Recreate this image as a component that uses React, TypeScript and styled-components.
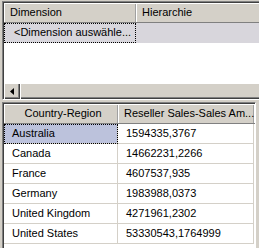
import React from 'react';
import styled, { createGlobalStyle, css } from 'styled-components';

const GlobalStyle = createGlobalStyle`
  html, body {
    margin: 0;
    padding: 0;
    background: #d4d0c8;
    overflow: hidden;
  }
  body {
    font-family: "Liberation Sans", Arial, sans-serif;
    font-size: 11px;
    color: #000;
  }
`;

const Page = styled.div`
  width: 259px;
  height: 248px;
  overflow: hidden;
  display: flex;
  flex-direction: column;
  gap: 2px;
  padding: 1px 0 0 2px;
  box-sizing: border-box;
`;

const sunken = css`
  border-top: 1px solid #808080;
  border-left: 1px solid #808080;
  border-right: 1px solid #ffffff;
  border-bottom: 1px solid #ffffff;
  box-shadow: inset 1px 1px 0 #404040;
  box-sizing: border-box;
`;

const Panel = styled.div<{ $width: number; $height: number }>`
  ${sunken};
  width: ${p => p.$width}px;
  height: ${p => p.$height}px;
  padding: 1px 0 0 1px;
  display: flex;
  flex-direction: column;
  background: #ffffff;
  flex-shrink: 0;
`;

const HeaderRow = styled.div<{ $cols: string }>`
  display: grid;
  grid-template-columns: ${p => p.$cols};
  height: 19px;
  border-bottom: 1px solid #808080;
`;

const HeaderCell = styled.div<{ $center?: boolean }>`
  background: #d4d0c8;
  box-shadow: inset 1px 1px 0 #ffffff, inset -1px 0 0 #a0a0a0;
  line-height: 19px;
  padding: 0 2px 0 6px;
  white-space: nowrap;
  overflow: hidden;
  text-align: ${p => (p.$center ? 'center' : 'left')};
  color: #000;
`;

const Row = styled.div<{ $cols: string; $bg?: string }>`
  display: grid;
  grid-template-columns: ${p => p.$cols};
  height: 20px;
  background: ${p => p.$bg || '#ffffff'};
`;

const Cell = styled.div<{ $focused?: boolean; $grid?: boolean; $tint?: boolean }>`
  line-height: 19px;
  padding: 0 0 0 ${p => (p.$grid ? 8 : 10)}px;
  white-space: nowrap;
  overflow: hidden;
  box-sizing: border-box;
  ${p =>
    p.$grid &&
    css`
      border-right: 1px solid #d4d0c8;
      border-bottom: 1px solid #d4d0c8;
    `}
  ${p =>
    p.$focused &&
    css`
      outline: 1px dotted #000;
      outline-offset: -1px;
    `}
  ${p =>
    p.$tint &&
    css`
      background: #bcc2dc;
    `}
`;

const Filler = styled.div`
  flex: 1;
`;

const HScroll = styled.div`
  height: 16px;
  display: flex;
  background: #e8e6e0;
  flex-shrink: 0;
`;

const ScrollButton = styled.div`
  width: 16px;
  height: 16px;
  background: #d4d0c8;
  box-shadow: inset 1px 1px 0 #ffffff, inset -1px -1px 0 #404040, inset -2px -2px 0 #808080;
  display: flex;
  align-items: center;
  justify-content: center;
  box-sizing: border-box;
`;

const Thumb = styled.div`
  flex: 1;
  background: #d4d0c8;
  box-shadow: inset 1px 1px 0 #ffffff, inset -1px -1px 0 #404040, inset -2px -2px 0 #808080;
`;

const LeftArrow = () => (
  <svg width="4" height="7" viewBox="0 0 4 7">
    <path d="M4 0 L0 3.5 L4 7 Z" fill="#000" />
  </svg>
);

const topCols = '132px 1fr';
const bottomCols = '114px 136px';

const data: [string, string][] = [
  ['Australia', '1594335,3767'],
  ['Canada', '14662231,2266'],
  ['France', '4607537,935'],
  ['Germany', '1983988,0373'],
  ['United Kingdom', '4271961,2302'],
  ['United States', '53330543,1764999'],
];

export default function App() {
  return (
    <>
      <GlobalStyle />
      <Page>
        <Panel $width={290} $height={99}>
          <HeaderRow $cols={topCols}>
            <HeaderCell>Dimension</HeaderCell>
            <HeaderCell>Hierarchie</HeaderCell>
          </HeaderRow>
          <Row $cols={topCols} $bg="#d8d6dc">
            <Cell $focused>&lt;Dimension auswähle...</Cell>
            <Cell />
          </Row>
          <Filler />
          <HScroll>
            <ScrollButton>
              <LeftArrow />
            </ScrollButton>
            <Thumb />
          </HScroll>
        </Panel>
        <Panel $width={254} $height={160}>
          <HeaderRow $cols={bottomCols}>
            <HeaderCell $center>Country-Region</HeaderCell>
            <HeaderCell>Reseller Sales-Sales Am...</HeaderCell>
          </HeaderRow>
          {data.map(([country, amount], i) => (
            <Row key={country} $cols={bottomCols}>
              <Cell $grid $focused={i === 0} $tint={i === 0}>
                {country}
              </Cell>
              <Cell $grid>{amount}</Cell>
            </Row>
          ))}
        </Panel>
      </Page>
    </>
  );
}
